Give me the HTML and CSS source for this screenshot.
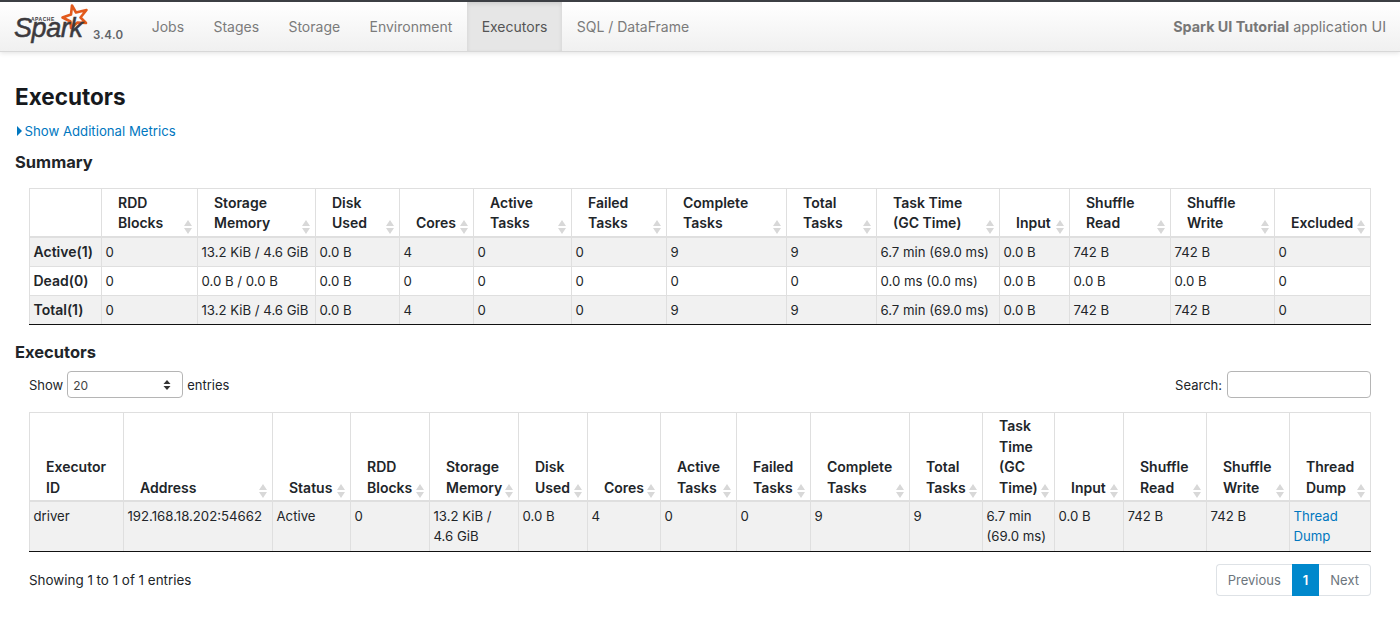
FILE: index.html
```html
<!DOCTYPE html>
<html>
    <head>
        <title>Executors</title>
        <link rel="stylesheet" href="styles.css">
    </head>
    <body>
        <nav class="navbar">
            <div class="brand">
                <svg class="logo" width="92" height="46" viewBox="0 0 92 46">
                    <path class="star" d="M72 3.500 L76 10.500 L86.500 8 L80.500 15.500 L86 21 L77.500 20.500 L71 26 L70.500 19.500 L62.500 15.500 L71 12.500 Z"/>
                    <text class="logo-apache" x="31" y="19">APACHE</text>
                    <text class="logo-spark" x="14" y="35">Spark</text>
                </svg>
                <span class="version">3.4.0</span>
            </div>
            <a class="nav-item">Jobs</a>
            <a class="nav-item">Stages</a>
            <a class="nav-item">Storage</a>
            <a class="nav-item">Environment</a>
            <a class="nav-item active">Executors</a>
            <a class="nav-item">SQL / DataFrame</a>
            <div class="app-name"><strong>Spark UI Tutorial</strong> application UI</div>
        </nav>

        <main class="content">
            <h3 class="page-title">Executors</h3>
            <a class="metrics-link"><span class="arrow-right"></span>Show Additional Metrics</a>

            <h4 class="section-title">Summary</h4>
            <table class="data-table summary-table">
                <colgroup>
                    <col><col><col><col><col><col><col><col><col><col><col><col><col><col>
                </colgroup>
                <thead>
                    <tr>
                        <th></th>
                        <th>RDD Blocks<span class="sort"></span></th>
                        <th>Storage Memory<span class="sort"></span></th>
                        <th>Disk Used<span class="sort"></span></th>
                        <th>Cores<span class="sort"></span></th>
                        <th>Active Tasks<span class="sort"></span></th>
                        <th>Failed Tasks<span class="sort"></span></th>
                        <th>Complete Tasks<span class="sort"></span></th>
                        <th>Total Tasks<span class="sort"></span></th>
                        <th>Task Time (GC Time)<span class="sort"></span></th>
                        <th>Input<span class="sort"></span></th>
                        <th>Shuffle Read<span class="sort"></span></th>
                        <th>Shuffle Write<span class="sort"></span></th>
                        <th>Excluded<span class="sort"></span></th>
                    </tr>
                </thead>
                <tbody>
                    <tr class="odd">
                        <td><b>Active(1)</b></td><td>0</td><td>13.2 KiB / 4.6 GiB</td><td>0.0 B</td><td>4</td><td>0</td><td>0</td><td>9</td><td>9</td><td>6.7 min (69.0 ms)</td><td>0.0 B</td><td>742 B</td><td>742 B</td><td>0</td>
                    </tr>
                    <tr>
                        <td><b>Dead(0)</b></td><td>0</td><td>0.0 B / 0.0 B</td><td>0.0 B</td><td>0</td><td>0</td><td>0</td><td>0</td><td>0</td><td>0.0 ms (0.0 ms)</td><td>0.0 B</td><td>0.0 B</td><td>0.0 B</td><td>0</td>
                    </tr>
                    <tr class="odd">
                        <td><b>Total(1)</b></td><td>0</td><td>13.2 KiB / 4.6 GiB</td><td>0.0 B</td><td>4</td><td>0</td><td>0</td><td>9</td><td>9</td><td>6.7 min (69.0 ms)</td><td>0.0 B</td><td>742 B</td><td>742 B</td><td>0</td>
                    </tr>
                </tbody>
            </table>

            <h4 class="section-title second">Executors</h4>
            <div class="table-controls">
                <label class="length">Show
                    <span class="fake-select">20
                        <svg width="8" height="12" viewBox="0 0 8 12"><path d="M4 1 L7.500 5 L0.500 5 Z M4 11 L0.500 7 L7.500 7 Z"/></svg>
                    </span>
                    entries</label>
                <label class="search">Search: <input type="text"></label>
            </div>
            <table class="data-table executors-table">
                <colgroup>
                    <col><col><col><col><col><col><col><col><col><col><col><col><col><col><col><col>
                </colgroup>
                <thead>
                    <tr>
                        <th>Executor ID</th>
                        <th>Address<span class="sort"></span></th>
                        <th>Status<span class="sort"></span></th>
                        <th>RDD Blocks<span class="sort"></span></th>
                        <th>Storage Memory<span class="sort"></span></th>
                        <th>Disk Used<span class="sort"></span></th>
                        <th>Cores<span class="sort"></span></th>
                        <th>Active Tasks<span class="sort"></span></th>
                        <th>Failed Tasks<span class="sort"></span></th>
                        <th>Complete Tasks<span class="sort"></span></th>
                        <th>Total Tasks<span class="sort"></span></th>
                        <th>Task Time (GC Time)<span class="sort"></span></th>
                        <th>Input<span class="sort"></span></th>
                        <th>Shuffle Read<span class="sort"></span></th>
                        <th>Shuffle Write<span class="sort"></span></th>
                        <th>Thread Dump<span class="sort"></span></th>
                    </tr>
                </thead>
                <tbody>
                    <tr class="odd">
                        <td>driver</td><td>192.168.18.202:54662</td><td>Active</td><td>0</td><td>13.2 KiB / 4.6 GiB</td><td>0.0 B</td><td>4</td><td>0</td><td>0</td><td>9</td><td>9</td><td>6.7 min (69.0 ms)</td><td>0.0 B</td><td>742 B</td><td>742 B</td><td><a class="link">Thread Dump</a></td>
                    </tr>
                </tbody>
            </table>
            <div class="table-footer">
                <div class="info">Showing 1 to 1 of 1 entries</div>
                <div class="pagination">
                    <a class="page">Previous</a>
                    <a class="page current">1</a>
                    <a class="page">Next</a>
                </div>
            </div>
        </main>
    </body>
</html>
```

FILE: styles.css
```css
* {
    box-sizing: border-box;
}

body {
    margin: 0;
    font-family: Inter, "Liberation Sans", sans-serif;
    font-size: 13.2px;
    line-height: 20px;
    color: #212529;
    background: #fff;
}

/* top bar */
.navbar {
    display: flex;
    align-items: stretch;
    height: 52px;
    border-top: 2px solid #3c3f44;
    border-bottom: 1px solid #d8d8d8;
    background: linear-gradient(to bottom, #ffffff, #f0f0f0);
    box-shadow: 0 1px 5px rgba(0, 0, 0, 0.12);
}

.brand {
    display: flex;
    width: 137px;
    position: relative;
}

.logo {
    flex: none;
}

.star {
    fill: none;
    stroke: #e25a1c;
    stroke-width: 2.6;
    stroke-linejoin: round;
}

.logo-apache {
    font-family: "Liberation Sans", sans-serif;
    font-size: 5px;
    font-weight: bold;
    letter-spacing: 0.5px;
    fill: #3c3a3e;
}

.logo-spark {
    font-family: "Liberation Sans", sans-serif;
    font-size: 27px;
    font-style: italic;
    letter-spacing: -0.4px;
    fill: #3c3a3e;
    stroke: #3c3a3e;
    stroke-width: 0.5;
}

.version {
    position: absolute;
    left: 93px;
    top: 25px;
    font-size: 11.500px;
    font-weight: 600;
    line-height: 16px;
    letter-spacing: 0.3px;
    color: #5f6368;
}

.nav-item {
    display: flex;
    align-items: center;
    padding: 0 14.700px;
    font-size: 14px;
    color: #7b7b7b;
}

.nav-item.active {
    background: #e6e6e6;
    box-shadow: inset 0 2px 4px rgba(0, 0, 0, 0.1);
    color: #555;
}

.app-name {
    margin-left: auto;
    padding: 0 14px 0 0;
    align-self: center;
    color: #777;
    font-size: 14.350px;
}

/* page body */
.content {
    padding: 0 29px;
}

.page-title {
    margin: 31px 0 0 -14px;
    font-size: 22.500px;
    line-height: 28px;
    font-weight: 700;
    color: #16191d;
}

.metrics-link {
    display: block;
    margin: 10px 0 0 -14px;
    line-height: 20px;
    color: #0077c0;
}

.arrow-right {
    display: inline-block;
    width: 0;
    height: 0;
    margin: 0 3px 0 1.500px;
    border-left: 5px solid #0077c0;
    border-top: 5px solid transparent;
    border-bottom: 5px solid transparent;
}

.section-title {
    margin: 11px 0 0 -14px;
    font-size: 16.500px;
    line-height: 20px;
    font-weight: 700;
}

.section-title.second {
    margin-top: 17px;
}

/* tables */
.data-table {
    width: 1341px;
    table-layout: fixed;
    border-collapse: collapse;
    border: 1px solid #dfdfdf;
    border-bottom: 0;
}

.summary-table {
    margin-top: 16px;
}

.data-table th,
.data-table td {
    border: 1px solid #dfdfdf;
    text-align: left;
    overflow: hidden;
}

.data-table th {
    position: relative;
    padding: 3px 16px 2px 16px;
    vertical-align: bottom;
    font-size: 14px;
    line-height: 20.500px;
    font-weight: 600;
    border-bottom-width: 2px;
}

.data-table td {
    padding: 4px 4px 4px 3.500px;
    vertical-align: top;
}

.data-table td b {
    font-size: 14px;
    font-weight: 600;
}

.data-table tbody tr.odd td {
    background: #f1f1f1;
}

.data-table tbody tr:last-child td {
    border-bottom: 1.500px solid #111;
}

.summary-table tbody tr {
    height: 29px;
}

.summary-table thead tr {
    height: 48px;
}

.executors-table thead tr {
    height: 89px;
}

.executors-table tbody tr {
    height: 50px;
}

.summary-table col:nth-child(1) { width: 72px; }
.summary-table col:nth-child(2) { width: 96px; }
.summary-table col:nth-child(3) { width: 118px; }
.summary-table col:nth-child(4) { width: 84px; }
.summary-table col:nth-child(5) { width: 74px; }
.summary-table col:nth-child(6) { width: 98px; }
.summary-table col:nth-child(7) { width: 95px; }
.summary-table col:nth-child(8) { width: 120px; }
.summary-table col:nth-child(9) { width: 90px; }
.summary-table col:nth-child(10) { width: 123px; }
.summary-table col:nth-child(11) { width: 70px; }
.summary-table col:nth-child(12) { width: 101px; }
.summary-table col:nth-child(13) { width: 104px; }
.summary-table col:nth-child(14) { width: 96px; }

.executors-table col:nth-child(1) { width: 94px; }
.executors-table col:nth-child(2) { width: 149px; }
.executors-table col:nth-child(3) { width: 78px; }
.executors-table col:nth-child(4) { width: 79px; }
.executors-table col:nth-child(5) { width: 89px; }
.executors-table col:nth-child(6) { width: 69px; }
.executors-table col:nth-child(7) { width: 73px; }
.executors-table col:nth-child(8) { width: 76px; }
.executors-table col:nth-child(9) { width: 74px; }
.executors-table col:nth-child(10) { width: 99px; }
.executors-table col:nth-child(11) { width: 73px; }
.executors-table col:nth-child(12) { width: 72px; }
.executors-table col:nth-child(13) { width: 69px; }
.executors-table col:nth-child(14) { width: 83px; }
.executors-table col:nth-child(15) { width: 83px; }
.executors-table col:nth-child(16) { width: 81px; }

/* sort arrows, both dimmed */
.sort {
    position: absolute;
    right: 5px;
    bottom: 2px;
    width: 8px;
    height: 14px;
}

.sort::before,
.sort::after {
    content: "";
    position: absolute;
    left: 0;
    width: 0;
    height: 0;
    border-left: 4px solid transparent;
    border-right: 4px solid transparent;
}

.sort::before {
    top: 0;
    border-bottom: 6px solid #d8d8d8;
}

.sort::after {
    bottom: 0;
    border-top: 6px solid #d8d8d8;
}

/* show / search row */
.table-controls {
    display: flex;
    justify-content: space-between;
    align-items: center;
    height: 28px;
    margin: 9px 0 13px 0;
    font-size: 13px;
}

.length,
.search {
    display: flex;
    align-items: center;
    gap: 4px;
}

.fake-select {
    display: flex;
    align-items: center;
    justify-content: space-between;
    width: 116px;
    height: 27px;
    padding: 2px 6px 0 5px;
    border: 1px solid #b5b5b5;
    border-radius: 4px;
    font-size: 12px;
    color: #444;
}

.fake-select svg {
    fill: #333;
    margin-top: -2px;
    margin-right: 5px;
}

.search {
    gap: 2px;
}

.search input {
    width: 144px;
    height: 27px;
    border: 1px solid #b5b5b5;
    border-radius: 4px;
    margin: 0 0 0 3px;
    padding: 0;
    background: #fff;
}

.link {
    color: #0077c0;
}

.table-footer {
    display: flex;
    justify-content: space-between;
    align-items: center;
    margin-top: 12px;
}

.info {
    font-size: 13.400px;
}

.pagination {
    display: flex;
    height: 32px;
    font-size: 13px;
}

.page {
    display: flex;
    align-items: center;
    padding: 0 11px;
    border: 1px solid #dee2e6;
    color: #6c757d;
}

.page:first-child {
    border-radius: 4px 0 0 4px;
    border-right: 0;
}

.page:last-child {
    border-radius: 0 4px 4px 0;
    border-left: 0;
}

.page.current {
    padding: 0 10px;
    background: #0088cc;
    border-color: #0088cc;
    color: #fff;
    font-weight: 600;
}
```
